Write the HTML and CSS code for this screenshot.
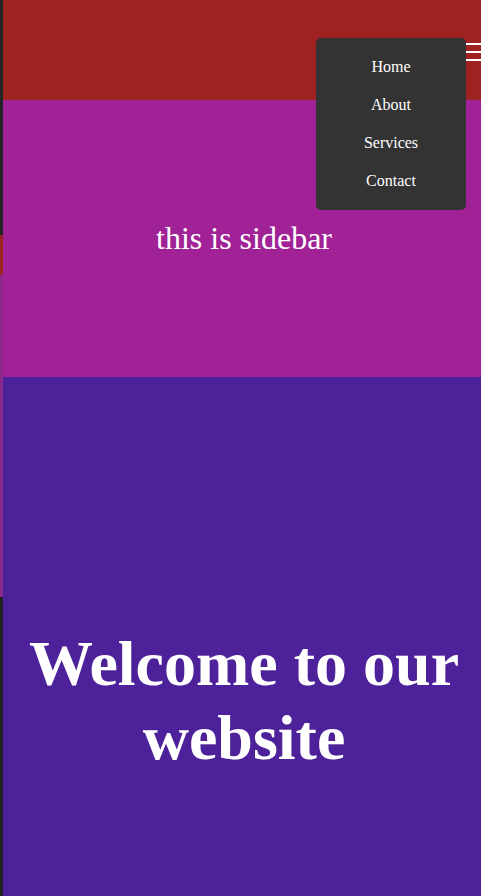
FILE: index.html
```html
<!DOCTYPE html>
<html lang="en">
<head>
<meta charset="utf-8">
<title>Welcome</title>
<link rel="stylesheet" href="styles.css">
</head>
<body>
  <div class="rail">
    <div class="rail-top"></div>
    <div class="rail-red"></div>
    <div class="rail-purple"></div>
  </div>
  <div class="page">
    <header class="header">
      <div class="burger"><span></span><span></span><span></span></div>
      <nav class="menu">
        <a href="#">Home</a>
        <a href="#">About</a>
        <a href="#">Services</a>
        <a href="#">Contact</a>
      </nav>
    </header>
    <aside class="sidebar">this is sidebar</aside>
    <main class="main">
      <h1 class="title">Welcome to our website</h1>
    </main>
  </div>
</body>
</html>
```
FILE: styles.css
```css
html, body {
  margin: 0;
  height: 100%;
  overflow: hidden;
}
body {
  background: #222222;
  display: flex;
  font-family: "Liberation Serif", "Times New Roman", serif;
  color: #ffffff;
}
.rail {
  width: 3px;
  flex: none;
  display: flex;
  flex-direction: column;
}
.rail-top { height: 235px; background: #232323; }
.rail-red { height: 40px; background: #9e2222; }
.rail-purple { height: 322px; background: #8a2a8c; }
.page {
  flex: 1;
  display: flex;
  flex-direction: column;
  position: relative;
}
.header {
  height: 100px;
  background: #9e2222;
  position: relative;
}
.burger {
  position: absolute;
  left: 463px;
  top: 43px;
  width: 25px;
  display: flex;
  flex-direction: column;
  gap: 6px;
}
.burger span {
  display: block;
  height: 2px;
  background: #ffffff;
}
.menu {
  position: absolute;
  left: 313px;
  top: 38px;
  width: 150px;
  padding: 10px 0;
  background: #333333;
  border-radius: 5px;
  display: flex;
  flex-direction: column;
  z-index: 2;
}
.menu a {
  color: #ffffff;
  text-decoration: none;
  font-size: 16px;
  line-height: 38px;
  text-align: center;
}
.sidebar {
  height: 277px;
  background: #a02296;
  display: flex;
  align-items: center;
  justify-content: center;
  font-size: 32px;
  padding-left: 4px;
}
.main {
  height: 519px;
  background: #4c219a;
  padding-top: 250px;
  padding-left: 4px;
  box-sizing: border-box;
}
.title {
  margin: 0;
  font-size: 64px;
  font-weight: bold;
  text-align: center;
}
```
